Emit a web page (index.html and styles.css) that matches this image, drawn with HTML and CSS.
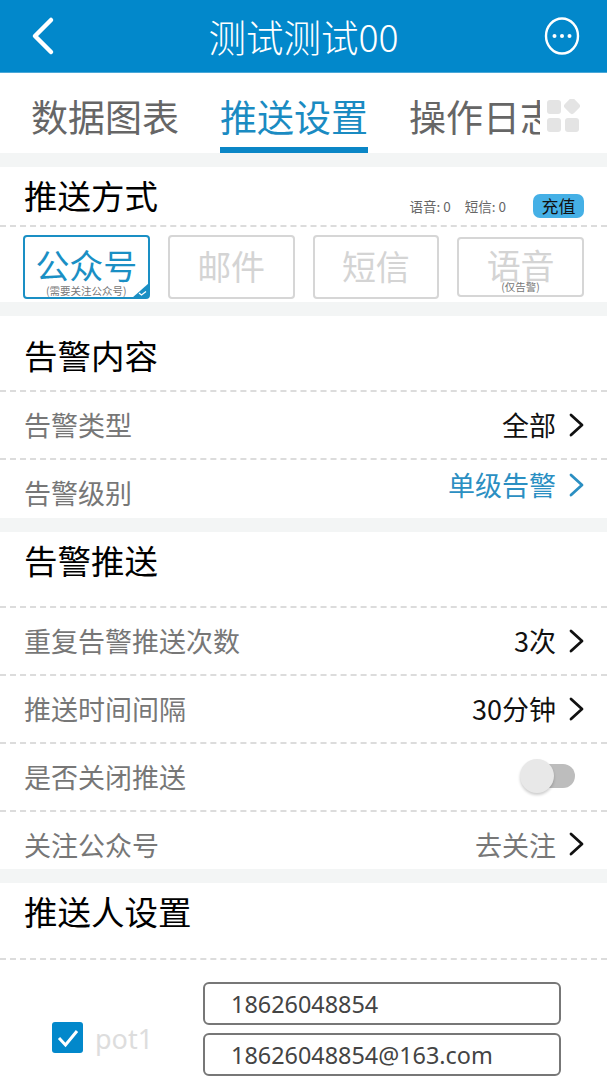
FILE: index.html
```html
<!DOCTYPE html>
<html lang="zh-CN">
<head>
    <meta charset="UTF-8">
    <meta name="viewport" content="width=device-width, initial-scale=1.0">
    <title>推送设置</title>
    <link rel="stylesheet" href="styles.css">
</head>
<body>
    <header class="topbar">
        <svg class="back-icon" width="26" height="40" viewBox="0 0 26 40"><path d="M21 4 L5 20 L21 36" fill="none" stroke="#fff" stroke-width="4.5" stroke-linecap="round" stroke-linejoin="round"/></svg>
        <h1 class="title">测试测试00</h1>
        <svg class="more-icon" width="36" height="38" viewBox="0 0 36 38"><ellipse cx="18" cy="19" rx="16" ry="17.5" fill="none" stroke="#fff" stroke-width="2.4"/><circle cx="10.5" cy="19" r="2" fill="#fff"/><circle cx="18" cy="19" r="2" fill="#fff"/><circle cx="25.5" cy="19" r="2" fill="#fff"/></svg>
    </header>

    <nav class="tabs">
        <span class="tab">数据图表</span>
        <span class="tab tab-active">推送设置</span>
        <span class="tab tab-cut"><span class="tab-clip">操作日志</span></span>
        <svg class="grid-icon" width="34" height="34" viewBox="0 0 34 34">
            <rect x="0" y="1" width="14" height="14" rx="3" fill="#e4e4e4"/>
            <rect x="18.5" y="0.5" width="13" height="13" rx="3" fill="#e4e4e4" transform="rotate(45 25 7)"/>
            <rect x="0" y="19" width="14" height="14" rx="3" fill="#e4e4e4"/>
            <rect x="18" y="19" width="14" height="14" rx="3" fill="#e4e4e4"/>
        </svg>
    </nav>

    <section class="block block-method">
        <div class="method-head">
            <h2 class="heading">推送方式</h2>
            <div class="balance">
                <span class="balance-text">语音: 0</span>
                <span class="balance-text">短信: 0</span>
                <span class="charge">充值</span>
            </div>
        </div>
        <div class="methods">
            <div class="method method-on">
                <span class="method-name">公众号</span>
                <span class="method-note">(需要关注公众号)</span>
                <svg class="corner" width="17" height="15" viewBox="0 0 17 15"><path d="M17 0 V12 Q17 15 14 15 H0 Z" fill="#1a8fc4"/><path d="M7 10 L9.5 12 L14 8.5" fill="none" stroke="#fff" stroke-width="1.3"/></svg>
            </div>
            <div class="method"><span class="method-name">邮件</span></div>
            <div class="method"><span class="method-name">短信</span></div>
            <div class="method method-low">
                <span class="method-name">语音</span>
                <span class="method-note">(仅告警)</span>
            </div>
        </div>
    </section>

    <section class="block">
        <h2 class="heading row-head">告警内容</h2>
        <div class="row">
            <span class="label">告警类型</span>
            <span class="value">全部</span>
            <svg class="arrow" width="16" height="24" viewBox="0 0 16 24"><path d="M2 2 L13 12 L2 22" fill="none" stroke="#111" stroke-width="2.8" stroke-linecap="round" stroke-linejoin="round"/></svg>
        </div>
        <div class="row row-last row-raised">
            <span class="label">告警级别</span>
            <span class="value value-blue">单级告警</span>
            <svg class="arrow" width="16" height="24" viewBox="0 0 16 24"><path d="M2 2 L13 12 L2 22" fill="none" stroke="#2b8fc2" stroke-width="2.8" stroke-linecap="round" stroke-linejoin="round"/></svg>
        </div>
    </section>

    <section class="block">
        <h2 class="heading row-head row-head-up">告警推送</h2>
        <div class="row">
            <span class="label">重复告警推送次数</span>
            <span class="value">3次</span>
            <svg class="arrow" width="16" height="24" viewBox="0 0 16 24"><path d="M2 2 L13 12 L2 22" fill="none" stroke="#111" stroke-width="2.8" stroke-linecap="round" stroke-linejoin="round"/></svg>
        </div>
        <div class="row">
            <span class="label">推送时间间隔</span>
            <span class="value">30分钟</span>
            <svg class="arrow" width="16" height="24" viewBox="0 0 16 24"><path d="M2 2 L13 12 L2 22" fill="none" stroke="#111" stroke-width="2.8" stroke-linecap="round" stroke-linejoin="round"/></svg>
        </div>
        <div class="row">
            <span class="label">是否关闭推送</span>
            <span class="switch"><span class="switch-knob"></span></span>
        </div>
        <div class="row row-last row-short">
            <span class="label">关注公众号</span>
            <span class="value value-gray">去关注</span>
            <svg class="arrow" width="16" height="24" viewBox="0 0 16 24"><path d="M2 2 L13 12 L2 22" fill="none" stroke="#111" stroke-width="2.8" stroke-linecap="round" stroke-linejoin="round"/></svg>
        </div>
    </section>

    <section class="block block-last">
        <h2 class="heading row-head">推送人设置</h2>
        <div class="person">
            <span class="check"><svg width="24" height="22" viewBox="0 0 24 22"><path d="M3 11 L9.5 18 L21 4" fill="none" stroke="#fff" stroke-width="3"/></svg></span>
            <span class="person-name">pot1</span>
            <div class="fields">
                <div class="field">18626048854</div>
                <div class="field">18626048854@163.com</div>
            </div>
        </div>
    </section>
</body>
</html>
```

FILE: styles.css
```css
html, body{
 margin: 0;
 height: 1080px;
 overflow: hidden;
}
body{
 width: 607px;
 background-color: #f3f5f5;
 font-family: "Noto Sans CJK SC", "Noto Sans", sans-serif;
 color: #111;
}
.topbar{
 height: 73px;
 background-color: #0288cb;
 display: flex;
 align-items: center;
 justify-content: space-between;
 padding: 0 27px 0 30px;
 box-sizing: border-box;
 border-bottom: 1px solid #4aa8d8;
}
.title{
 margin: 0;
 font-size: 37.5px;
 font-weight: 300;
 color: #fff;
 line-height: 1;
 margin-left: 7px;
}
.tabs{
 height: 80px;
 background-color: #fff;
 display: flex;
 align-items: flex-start;
 padding-left: 31px;
 box-sizing: border-box;
 position: relative;
}
.tab{
 font-size: 37px;
 line-height: 46px;
 padding-top: 20px;
 color: #666;
 width: 148px;
 white-space: nowrap;
 text-align: center;
 margin-right: 41px;
 height: 80px;
 box-sizing: border-box;
}
.tab-active{
 color: #1a8bc2;
 border-bottom: 6px solid #0a86c6;
}
.tab-cut{
 margin: 0;
 text-align: left;
 width: 131px;
 overflow: hidden;
}
.tab-clip{
 display: block;
 width: 148px;
}
.grid-icon{
 position: absolute;
 left: 547px;
 top: 26px;
}
.block{
 background-color: #fff;
 margin-top: 14px;
}
.heading{
 margin: 0;
 font-size: 33.5px;
 font-weight: 400;
 color: #000;
 line-height: 40px;
}
.block-method{
 height: 135px;
 overflow: hidden;
}
.method-head{
 height: 60px;
 display: flex;
 justify-content: space-between;
 align-items: flex-start;
 padding: 8px 23px 0 24px;
 box-sizing: border-box;
 border-bottom: 2px dashed #dcdcdc;
}
.balance{
 display: flex;
 align-items: center;
 margin-top: 19px;
}
.balance-text{
 font-size: 13.5px;
 color: #666;
 margin-right: 14px;
}
.charge{
 margin-left: 13px;
 width: 51px;
 height: 24px;
 border-radius: 7px;
 background-color: #45b0e6;
 color: #111;
 font-size: 17px;
 line-height: 24px;
 text-align: center;
}
.methods{
 display: flex;
 align-items: flex-start;
 gap: 18px;
 padding: 8px 23px 0 23px;
}
.method{
 flex: 1;
 height: 64px;
 border: 2px solid #d6d6d6;
 border-radius: 4px;
 box-sizing: border-box;
 text-align: center;
 position: relative;
 color: #d4d4d4;
}
.method-name{
 display: block;
 font-size: 34px;
 line-height: 40px;
 padding-top: 9px;
}
.method-note{
 position: absolute;
 left: 0;
 right: 0;
 bottom: 1px;
 font-size: 10.5px;
 line-height: 11px;
 color: #777;
}
.method-on{
 border-color: #1a8fc4;
 color: #1a8fc4;
}
.method-on .method-name{
 padding-top: 8px;
}
.method-low{
 margin-top: 2px;
 height: 60px;
}
.method-low .method-name{
 padding-top: 6px;
}
.method-low .method-note{
 bottom: 3px;
}
.corner{
 position: absolute;
 right: -1px;
 bottom: -1px;
}
.row-head{
 height: 76px;
 line-height: 78px;
 padding-left: 24px;
 box-sizing: border-box;
 border-bottom: 2px dashed #dcdcdc;
}
.row-head-up{
 line-height: 56px;
}
.row{
 height: 68px;
 display: flex;
 align-items: center;
 padding: 0 22px 0 24px;
 box-sizing: border-box;
 border-bottom: 2px dashed #dcdcdc;
}
.row-last{
 height: 58px;
 border-bottom: none;
}
.row-short{
 height: 57px;
}
.label{
 flex: 1;
 font-size: 27px;
 color: #777;
 padding-bottom: 2px;
}
.row-last .label{
 padding-top: 7px;
 padding-bottom: 0;
}
.row-raised .label{
 padding-top: 6px;
}
.value{
 font-size: 27px;
 color: #111;
 margin-right: 13px;
 padding-bottom: 2px;
}
.row-short .value{
 padding-top: 7px;
 padding-bottom: 0;
}
.row-short .arrow{
 margin-top: 7px;
}
.row-raised .value, .row-raised .arrow{
 margin-bottom: 8px;
}
.value-blue{
 color: #2b8fc2;
}
.value-gray{
 color: #777;
}
.switch{
 position: relative;
 width: 38px;
 height: 24px;
 border-radius: 12px;
 background-color: #bdbdbd;
 margin-right: 10px;
 margin-bottom: 2px;
}
.switch-knob{
 position: absolute;
 left: -17px;
 top: -5px;
 width: 34px;
 height: 34px;
 border-radius: 50%;
 background-color: #e8e8e8;
 box-shadow: 0 2px 3px rgba(0, 0, 0, 0.2);
}
.block-last{
 height: 197px;
}
.block-last .row-head{
 height: 77px;
 line-height: 55px;
}
.person{
 display: flex;
 align-items: flex-start;
 padding: 22px 0 0 52px;
}
.check{
 width: 31px;
 height: 31px;
 margin-top: 40px;
 border-radius: 3px;
 background-color: #0288cb;
 display: flex;
 align-items: center;
 justify-content: center;
}
.person-name{
 width: 120px;
 margin-top: 38px;
 padding-left: 12px;
 box-sizing: border-box;
 font-family: "Noto Sans", sans-serif;
 font-size: 27px;
 line-height: 38px;
 color: #ddd;
}
.fields{
 display: flex;
 flex-direction: column;
 gap: 8px;
}
.field{
 width: 358px;
 height: 43px;
 border: 2px solid #777;
 border-radius: 6px;
 box-sizing: border-box;
 padding-left: 26px;
 font-family: "Noto Sans", sans-serif;
 font-size: 23.4px;
 line-height: 40px;
 color: #444;
}
```
